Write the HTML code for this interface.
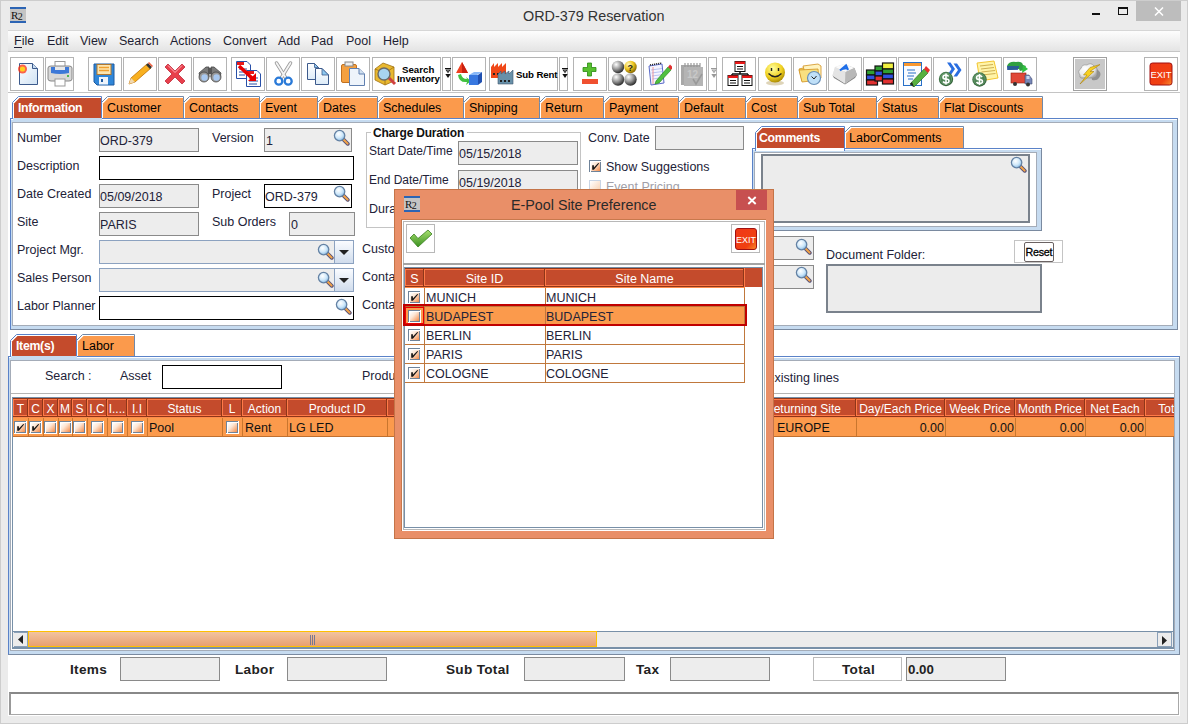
<!DOCTYPE html>
<html><head><meta charset="utf-8">
<style>
*{box-sizing:border-box}
body{margin:0;width:1188px;height:724px;overflow:hidden;position:relative;background:#ebebeb;font-family:"Liberation Sans",sans-serif;font-size:12.5px;color:#1e1e32}
.a{position:absolute}
.t{position:absolute;white-space:nowrap;line-height:1}
.btn{position:absolute;top:57px;height:34px;border:1px solid #b4b4b4;background:#fff;overflow:hidden}
.tab{position:absolute;white-space:nowrap;line-height:1}
.fld{position:absolute;background:#ededed;border:1px solid #8c8c8c}
.wf{position:absolute;background:#fff;border:1px solid #000}
</style></head><body>
<div class="a" style="left:0px;top:0px;width:1188px;height:724px;border:1px solid #cdcdcd;background:#ebebeb"></div>
<div class="a" style="left:10px;top:7px;width:16px;height:16px;background:#c4c4c4;border-top:2px solid #2c64b4;border-bottom:2px solid #2c64b4"></div>
<div class="t" style="left:11px;top:10px;font-family:'Liberation Serif',serif;font-size:11px;color:#111;letter-spacing:-0.5px">R<span style="font-size:10px;position:relative;top:1px">2</span></div>
<div class="t" style="left:523px;top:9px;font-size:14.4px;color:#333">ORD-379 Reservation</div>
<div class="a" style="left:1092px;top:13px;width:8px;height:2px;background:#111"></div>
<div class="a" style="left:1118px;top:7px;width:10px;height:8px;border:1px solid #111;border-top-width:2px"></div>
<div class="a" style="left:1136px;top:1px;width:45px;height:20px;background:#bdbdbd"></div>
<svg class="a" style="left:1154px;top:7px" width="10" height="9"><path d="M1 0.5L9 8.5M9 0.5L1 8.5" stroke="#fff" stroke-width="1.5"/></svg>
<div class="a" style="left:8px;top:30px;width:1172px;height:686px;background:#fff"></div>
<div class="a" style="left:8px;top:30px;width:1172px;height:22px;background:linear-gradient(#fdfdfd,#e4e4e4);border-top:1px solid #d6d6d6;border-bottom:1px solid #c6c6c6"></div>
<div class="t" style="left:14px;top:35px;font-size:12.5px">File</div>
<div class="t" style="left:47px;top:35px;font-size:12.5px">Edit</div>
<div class="t" style="left:80px;top:35px;font-size:12.5px">View</div>
<div class="t" style="left:119px;top:35px;font-size:12.5px">Search</div>
<div class="t" style="left:170px;top:35px;font-size:12.5px">Actions</div>
<div class="t" style="left:223px;top:35px;font-size:12.5px">Convert</div>
<div class="t" style="left:278px;top:35px;font-size:12.5px">Add</div>
<div class="t" style="left:311px;top:35px;font-size:12.5px">Pad</div>
<div class="t" style="left:346px;top:35px;font-size:12.5px">Pool</div>
<div class="t" style="left:383px;top:35px;font-size:12.5px">Help</div>
<div class="a" style="left:14px;top:47px;width:8px;height:1px;background:#1e1e32"></div>
<div class="a" style="left:8px;top:92px;width:1172px;height:1px;background:#c4c4c4"></div>
<div class="btn" style="left:10px;width:34px"></div>
<div class="btn" style="left:45px;width:29px"></div>
<div class="btn" style="left:88px;width:34px"></div>
<div class="btn" style="left:123px;width:34px"></div>
<div class="btn" style="left:158px;width:34px"></div>
<div class="btn" style="left:193px;width:34px"></div>
<div class="btn" style="left:231px;width:34px"></div>
<div class="btn" style="left:266px;width:34px"></div>
<div class="btn" style="left:301px;width:34px"></div>
<div class="btn" style="left:336px;width:34px"></div>
<div class="btn" style="left:372px;width:69px"></div>
<div class="btn" style="left:442px;width:9px"></div>
<div class="btn" style="left:452px;width:34px"></div>
<div class="btn" style="left:489px;width:69px"></div>
<div class="btn" style="left:559px;width:9px"></div>
<div class="btn" style="left:573px;width:34px"></div>
<div class="btn" style="left:608px;width:34px"></div>
<div class="btn" style="left:643px;width:34px"></div>
<div class="btn" style="left:678px;width:29px"></div>
<div class="btn" style="left:708px;width:9px"></div>
<div class="btn" style="left:722px;width:34px"></div>
<div class="btn" style="left:758px;width:34px"></div>
<div class="btn" style="left:793px;width:34px"></div>
<div class="btn" style="left:828px;width:34px"></div>
<div class="btn" style="left:863px;width:34px"></div>
<div class="btn" style="left:898px;width:34px"></div>
<div class="btn" style="left:933px;width:34px"></div>
<div class="btn" style="left:968px;width:34px"></div>
<div class="btn" style="left:1003px;width:34px"></div>
<div class="btn" style="left:1073px;width:34px;background:#c8c8c8;box-shadow:inset 0 0 0 1px #fff;border-color:#a0a0a0"></div>
<div class="btn" style="left:1144px;width:34px"></div>
<svg class="a" style="left:17px;top:61px" width="24" height="26" viewBox="0 0 24 26"><defs><linearGradient id="nd" x1="0" y1="0" x2="1" y2="1"><stop offset="0" stop-color="#fff"/><stop offset="1" stop-color="#cfe2f4"/></linearGradient></defs><path d="M2.5 2.5H15.5L20.5 7.5V23.5H2.5Z" fill="url(#nd)" stroke="#3c5a8c"/><path d="M15.5 2.5V7.5H20.5" fill="#c8dcf0" stroke="#3c5a8c"/><circle cx="5.5" cy="8" r="4.5" fill="#ff3010" opacity="0.75"/><circle cx="5.5" cy="8" r="2.6" fill="#ffd020"/></svg>
<svg class="a" style="left:46px;top:60px" width="28" height="28" viewBox="0 0 28 28"><rect x="9" y="1.5" width="10" height="9" fill="#fff" stroke="#999"/><path d="M2 8Q2 6 5 6H23Q26 6 26 8V19Q26 21 23 21H5Q2 21 2 19Z" fill="#d8d8d8" stroke="#888"/><path d="M5 7H23V13Q14 15 5 13Z" fill="#3c78d8"/><rect x="9" y="7" width="10" height="3" fill="#e8e8e8"/><rect x="9" y="19" width="10" height="7" fill="#fff" stroke="#999"/><circle cx="22" cy="16" r="1" fill="#2a2"/></svg>
<svg class="a" style="left:93px;top:63px" width="23" height="23" viewBox="0 0 23 23"><path d="M1 1H21V22H4L1 19Z" fill="#2f86d8" stroke="#1f5aa0"/><rect x="4" y="1.5" width="14" height="10" fill="#fde6b0" stroke="#b07830"/><path d="M6 4.5H16M6 7.5H16" stroke="#f0a030" stroke-width="1.6"/><rect x="6" y="14" width="9" height="7.5" fill="#eef4fb"/><rect x="8" y="16" width="2" height="3" fill="#1f5aa0"/></svg>
<svg class="a" style="left:127px;top:62px" width="26" height="24" viewBox="0 0 26 24"><path d="M2 22L4 16L20 2L24 6L8 20Z" fill="#f8b020" stroke="#c07000" stroke-width="0.8"/><path d="M2 22L4 16L8 20Z" fill="#f0d8b0"/><path d="M19 3L23 7L25 5L21 1Z" fill="#333"/><path d="M21.5 0.5L25.5 4.5" stroke="#f06040" stroke-width="1.5"/></svg>
<svg class="a" style="left:164px;top:63px" width="22" height="22" viewBox="0 0 22 22"><path d="M4 1L11 8L18 1L21 4L14 11L21 18L18 21L11 14L4 21L1 18L8 11L1 4Z" fill="#e8404c" stroke="#c02838" stroke-width="0.8"/><path d="M4 2.5L11 9.5L18 2.5" fill="none" stroke="#ffb0b8" stroke-width="1"/></svg>
<svg class="a" style="left:197px;top:65px" width="26" height="18" viewBox="0 0 26 18"><path d="M2 8L9 2H12V12H3Z" fill="#7a7a7a" stroke="#444" stroke-width="0.8"/><path d="M24 8L17 2H14V12H23Z" fill="#7a7a7a" stroke="#444" stroke-width="0.8"/><rect x="11" y="3" width="4" height="6" fill="#555"/><circle cx="7" cy="12" r="5" fill="#999" stroke="#444" stroke-width="0.8"/><circle cx="19" cy="12" r="5" fill="#999" stroke="#444" stroke-width="0.8"/><circle cx="7.5" cy="12.5" r="3.2" fill="#a8c8f0"/><circle cx="19.5" cy="12.5" r="3.2" fill="#a8c8f0"/></svg>
<svg class="a" style="left:235px;top:60px" width="27" height="28" viewBox="0 0 27 28"><path d="M1.5 1.5H12L15.5 5V18.5H1.5Z" fill="#fff" stroke="#2850a8"/><rect x="2" y="2" width="7" height="3" fill="#e81818"/><path d="M4 9H12M4 12H12M4 15H10" stroke="#2850a8"/><path d="M11.5 10.5H22L25.5 14V26.5H11.5Z" fill="#fff" stroke="#2850a8"/><rect x="12" y="11" width="7" height="3" fill="#e81818"/><path d="M14 18H23M14 21H23M14 24H22" stroke="#2850a8"/><path d="M4 6L18 19" stroke="#e80000" stroke-width="3.5"/><path d="M13 21H21V13Z" fill="#e80000"/></svg>
<svg class="a" style="left:273px;top:61px" width="21" height="26" viewBox="0 0 21 26"><path d="M3.5 2L12.5 16.5" stroke="#9a9a9a" stroke-width="3.4" stroke-linecap="round"/><path d="M17.5 2L8.5 16.5" stroke="#9a9a9a" stroke-width="3.4" stroke-linecap="round"/><path d="M3.5 2L12.5 16.5M17.5 2L8.5 16.5" stroke="#f4f4f4" stroke-width="1.8" stroke-linecap="round"/><circle cx="5.8" cy="20.2" r="3.5" fill="none" stroke="#2a7ad8" stroke-width="2.3"/><circle cx="15.2" cy="20.2" r="3.5" fill="none" stroke="#2a7ad8" stroke-width="2.3"/></svg>
<svg class="a" style="left:306px;top:62px" width="24" height="24" viewBox="0 0 24 24"><defs><linearGradient id="cpg" x1="0" y1="0" x2="0" y2="1"><stop offset="0" stop-color="#fff"/><stop offset="1" stop-color="#dcebf8"/></linearGradient></defs><path d="M1.5 1.5H8.5L12.5 5.5V17.5H1.5Z" fill="url(#cpg)" stroke="#3c5a8c"/><path d="M8.5 1.5V5.5H12.5Z" fill="#8cc8f0" stroke="#3c5a8c" stroke-width="0.8"/><path d="M9.5 6.5H16L22.5 13V22.5H9.5Z" fill="url(#cpg)" stroke="#3c5a8c"/><path d="M16 6.5V13H22.5Z" fill="#8cc8f0" stroke="#3c5a8c" stroke-width="0.8"/></svg>
<svg class="a" style="left:340px;top:61px" width="27" height="26" viewBox="0 0 27 26"><rect x="1.5" y="3.5" width="15" height="18" rx="1.5" fill="#f4a040" stroke="#c07020"/><rect x="5" y="1" width="8" height="4" fill="#eee" stroke="#888"/><path d="M9.5 7.5H19L24.5 13V24.5H9.5Z" fill="#eef4fb" stroke="#6080b0"/><path d="M19 7.5V13H24.5" fill="#d0e0f0" stroke="#6080b0"/></svg>
<svg class="a" style="left:373px;top:61px" width="24" height="26" viewBox="0 0 24 26"><path d="M2 8L10 2L21 6V20L12 24L2 19Z" fill="#e8b830" stroke="#a07010" stroke-width="0.8"/><path d="M2 8L12 12V24" fill="none" stroke="#a07010" stroke-width="0.8"/><path d="M12 12L21 6" stroke="#a07010" stroke-width="0.8"/><path d="M16 17L22 23" stroke="#d04040" stroke-width="3"/><circle cx="11" cy="13" r="6" fill="#a8d4f0" stroke="#6a6a6a" stroke-width="1.4"/></svg>
<div class="t" style="left:402px;top:65px;font-size:9.7px;font-weight:bold;color:#000">Search</div>
<div class="t" style="left:397px;top:74px;font-size:9.7px;font-weight:bold;color:#000;letter-spacing:-0.1px">Inventory</div>
<svg class="a" style="left:444.5px;top:68px" width="6" height="11" viewBox="0 0 6 11"><path d="M0 0.5H6" stroke="#111"/><path d="M0.3 1.5H5.7L3 5.2Z" fill="#111"/><path d="M1.6 2.3H4.4L3 4Z" fill="#fff" opacity="0.5"/><path d="M0.3 6H5.7L3 10Z" fill="#111"/></svg>
<svg class="a" style="left:455px;top:61px" width="28" height="26" viewBox="0 0 28 26"><path d="M7 1L13 12H1Z" fill="#f04020"/><path d="M7 1L13 12H7Z" fill="#c82010"/><path d="M3 14Q4 22 12 21L11 24L16 20L11 16L12 18Q7 18 6 13Z" fill="#40c040"/><path d="M14 14L19 11H27L22 14Z" fill="#88b8f8"/><rect x="14" y="14" width="9" height="10" fill="#3878e0"/><path d="M23 14L27 11V21L23 24Z" fill="#2050b0"/></svg>
<svg class="a" style="left:490px;top:61px" width="26" height="26" viewBox="0 0 26 26"><path d="M1 17V6L4 2V6L8 2V6L12 2V6L16 2V17Z" fill="#f04818"/><rect x="3" y="12" width="2" height="2" fill="#222"/><rect x="7" y="12" width="2" height="2" fill="#222"/><path d="M8 23V13L11 10V13L15 10V13L19 10V13L23 9V23Z" fill="#6890a8" stroke="#405870" stroke-width="0.6"/><rect x="10" y="19" width="2" height="2" fill="#222"/><rect x="14" y="19" width="2" height="2" fill="#222"/><rect x="18" y="19" width="2" height="2" fill="#222"/></svg>
<div class="t" style="left:516px;top:70px;font-size:9.7px;font-weight:bold;color:#000;letter-spacing:-0.15px">Sub Rent</div>
<svg class="a" style="left:561.5px;top:68px" width="6" height="11" viewBox="0 0 6 11"><path d="M0 0.5H6" stroke="#111"/><path d="M0.3 1.5H5.7L3 5.2Z" fill="#111"/><path d="M1.6 2.3H4.4L3 4Z" fill="#fff" opacity="0.5"/><path d="M0.3 6H5.7L3 10Z" fill="#111"/></svg>
<svg class="a" style="left:581px;top:62px" width="18" height="23" viewBox="0 0 18 23"><path d="M6.5 1H10.5V5.5H15V9.5H10.5V14H6.5V9.5H2V5.5H6.5Z" fill="#58c030" stroke="#2a8a10" stroke-width="0.8"/><rect x="1" y="17" width="16" height="5" fill="#f05030"/></svg>
<svg class="a" style="left:611px;top:60px" width="27" height="27" viewBox="0 0 27 27"><defs><radialGradient id="bl" cx="0.35" cy="0.3" r="0.75"><stop offset="0" stop-color="#fff"/><stop offset="0.5" stop-color="#999"/><stop offset="1" stop-color="#222"/></radialGradient><radialGradient id="by" cx="0.35" cy="0.3" r="0.75"><stop offset="0" stop-color="#fff8c0"/><stop offset="0.5" stop-color="#f0c820"/><stop offset="1" stop-color="#806000"/></radialGradient></defs><circle cx="7" cy="7" r="6.2" fill="url(#bl)"/><circle cx="19.5" cy="7" r="6.2" fill="url(#by)"/><circle cx="7" cy="19.5" r="6.2" fill="url(#bl)"/><circle cx="19.5" cy="19.5" r="6.2" fill="url(#bl)"/><text x="16.5" y="11" font-size="9" font-weight="bold" fill="#222" font-family="Liberation Sans">?</text></svg>
<svg class="a" style="left:647px;top:61px" width="25" height="26" viewBox="0 0 25 26"><path d="M2 5L15 3L17 22L4 24Z" fill="#f4f4ff" stroke="#5a6ac8"/><path d="M4 9L15 7.5M4.5 12L15.5 10.5M5 15L16 13.5M5.5 18L16 16.5" stroke="#a8b8f0" stroke-width="0.8"/><path d="M6 6V23" stroke="#f08080" stroke-width="0.8"/><path d="M3 4L15 2" stroke="#222" stroke-width="1.5" stroke-dasharray="1,1"/><path d="M9 20L21 6L24 9L12 22L8 23Z" fill="#50c040" stroke="#208010" stroke-width="0.6"/><path d="M21 6L23 3.5L26 6.5L24 9Z" fill="#e03030"/></svg>
<svg class="a" style="left:679px;top:61px" width="27" height="26" viewBox="0 0 27 26"><rect x="2" y="4" width="19" height="20" fill="#a8a8a8"/><rect x="5" y="6" width="19" height="19" fill="#b4b4b4"/><path d="M6 2V6M9 2V6M12 2V6M15 2V6M18 2V6M21 2V6" stroke="#999" stroke-width="1.2"/><text x="8" y="17" font-size="10" font-weight="bold" fill="#c8c8c8" font-family="Liberation Sans">12</text><path d="M14 18L17 23L23 13" fill="none" stroke="#999" stroke-width="1.5"/></svg>
<svg class="a" style="left:710.5px;top:68px" width="6" height="11" viewBox="0 0 6 11"><path d="M0 0.5H6" stroke="#999"/><path d="M0.3 1.5H5.7L3 5.2Z" fill="#999"/><path d="M1.6 2.3H4.4L3 4Z" fill="#fff" opacity="0.5"/><path d="M0.3 6H5.7L3 10Z" fill="#999"/></svg>
<svg class="a" style="left:727px;top:60px" width="26" height="27" viewBox="0 0 26 27"><path d="M13 11V14M5 14H21M5 14V17M21 14V17" stroke="#111" stroke-width="1.5"/><rect x="8" y="1.5" width="10" height="10" fill="#fff" stroke="#111"/><rect x="8" y="1.5" width="10" height="2.5" fill="#e81818"/><path d="M10 6.5H16M10 9H16" stroke="#111"/><rect x="1" y="15.5" width="10" height="10" fill="#fff" stroke="#111"/><rect x="1" y="15.5" width="10" height="2.5" fill="#e81818"/><path d="M3 20.5H9M3 23H9" stroke="#111"/><rect x="15" y="15.5" width="10" height="10" fill="#fff" stroke="#111"/><rect x="15" y="15.5" width="10" height="2.5" fill="#e81818"/><path d="M17 20.5H23M17 23H23" stroke="#111"/></svg>
<svg class="a" style="left:763px;top:61px" width="24" height="25" viewBox="0 0 24 25"><defs><radialGradient id="sm" cx="0.4" cy="0.3" r="0.75"><stop offset="0" stop-color="#ffffa0"/><stop offset="0.6" stop-color="#f0d020"/><stop offset="1" stop-color="#a08000"/></radialGradient></defs><ellipse cx="12" cy="22" rx="9" ry="2.5" fill="#c8b888" opacity="0.6"/><circle cx="12" cy="11.5" r="10" fill="url(#sm)"/><path d="M8.5 7V10M15.5 7V10" stroke="#222" stroke-width="1.4"/><path d="M5.5 12.5Q12 19 18.5 12.5" fill="none" stroke="#222" stroke-width="1.4"/></svg>
<svg class="a" style="left:798px;top:62px" width="25" height="24" viewBox="0 0 25 24"><path d="M1 7L9 5L10 7H20V17L4 19Z" fill="#f8d860" stroke="#d09020" stroke-width="0.8"/><path d="M5 4L20 2L23 4V16L9 18Z" fill="#fff4c0" stroke="#d09020" stroke-width="0.8"/><path d="M1 8L20 7L21 18L4 20Z" fill="#f8e080" stroke="#d09020" stroke-width="0.8"/><circle cx="16" cy="16" r="6.5" fill="#c0e0f8" stroke="#6890b8" stroke-width="1.2"/><path d="M13.5 14.5L16 17L18.5 14" fill="none" stroke="#222" stroke-width="1"/></svg>
<svg class="a" style="left:831px;top:62px" width="28" height="24" viewBox="0 0 28 24"><defs><linearGradient id="kg" x1="0" y1="0" x2="1" y2="0"><stop offset="0" stop-color="#e8e8e8"/><stop offset="0.5" stop-color="#d8d8d8"/><stop offset="1" stop-color="#909090"/></linearGradient></defs><path d="M4 5L13 2L23.5 6L26 13L14 21.5L1.5 13.5Z" fill="url(#kg)"/><path d="M1.5 13.5L14 21.5L26 13L24 16L14 22.5L3 16Z" fill="#888"/><path d="M4 5L13 2L23.5 6L14.5 10Z" fill="#fafafa"/><path d="M4 5L14.5 10L14 21.5L1.5 13.5Z" fill="#e4e4e4"/><path d="M14.5 10L23.5 6L26 13L14 21.5Z" fill="#b8b8b8"/><path d="M9 8.5L15 3.5L17 8M11 7L16.5 6" stroke="#1e6ee8" stroke-width="2.2" fill="none"/></svg>
<svg class="a" style="left:865px;top:61px" width="31" height="25" viewBox="0 0 31 25"><g stroke="#111" stroke-width="1.2"><rect x="1.5" y="9" width="11" height="5" fill="#30a030"/><rect x="1.5" y="14" width="11" height="5" fill="#3050e0"/><rect x="1.5" y="19" width="11" height="5" fill="#e03030"/><rect x="10" y="5" width="9" height="5" fill="#30a030"/><rect x="10" y="10" width="9" height="5" fill="#3050e0"/><rect x="10" y="15" width="9" height="5" fill="#e03030"/><rect x="17.5" y="2" width="11" height="6" fill="#f0f040"/><rect x="17.5" y="8" width="11" height="5" fill="#30a030"/><rect x="17.5" y="13" width="11" height="5" fill="#3050e0"/><rect x="17.5" y="18" width="11" height="5" fill="#e03030"/></g></svg>
<svg class="a" style="left:902px;top:61px" width="28" height="26" viewBox="0 0 28 26"><rect x="1.5" y="1.5" width="18" height="23" fill="#f8fbff" stroke="#2870c8"/><rect x="2" y="2" width="17" height="3" fill="#f89830"/><path d="M5 9H13M6 12H14M5 15H12M6 18H11" stroke="#2870c8" stroke-width="1.2"/><path d="M8 23L22 8L26 12L12 26Z" fill="#58b040" stroke="#206010" stroke-width="0.6"/><path d="M22 8L24 5L28 9L26 12Z" fill="#e83030"/><path d="M8 23L10 21L12 26Z" fill="#222"/></svg>
<svg class="a" style="left:938px;top:62px" width="25" height="25" viewBox="0 0 25 25"><path d="M9 0.5H12.5L17 7L12.5 13.5H9L13.5 7Z" fill="#2a6ee0"/><path d="M15.5 1.5H19L23.5 8L19 14.5H15.5L20 8Z" fill="#2a6ee0"/><defs><radialGradient id="dg1" cx="0.45" cy="0.4" r="0.6"><stop offset="0" stop-color="#6aa070"/><stop offset="0.8" stop-color="#3c7044"/><stop offset="1" stop-color="#2e5a34"/></radialGradient></defs><circle cx="8" cy="17" r="7.2" fill="url(#dg1)"/><circle cx="8" cy="17" r="5.6" fill="none" stroke="#7ab080" stroke-width="0.6"/><path d="M10.6 14.4Q9.5 13 8 13Q5 13 5 15.2Q5 17 8 17Q11 17 11 19Q11 21 8 21Q6 21 5 19.5M8 11.5V22.5" fill="none" stroke="#fff" stroke-width="1.6"/></svg>
<svg class="a" style="left:971px;top:60px" width="28" height="28" viewBox="0 0 28 28"><path d="M6 3L23 1L27 18L9 21Z" fill="#fff4a8" stroke="#f0c020" stroke-width="0.9"/><path d="M9 6L22 4.5M10 9L23 7.5M10.5 12L24 10.5M11 15L24.5 13.5" stroke="#c8a848" stroke-width="0.9"/><defs><radialGradient id="dg2" cx="0.45" cy="0.4" r="0.6"><stop offset="0" stop-color="#6aa070"/><stop offset="0.8" stop-color="#3c7044"/><stop offset="1" stop-color="#2e5a34"/></radialGradient></defs><circle cx="8.5" cy="19.5" r="7.2" fill="url(#dg2)"/><circle cx="8.5" cy="19.5" r="5.6" fill="none" stroke="#7ab080" stroke-width="0.6"/><path d="M11.1 16.9Q10.0 15.5 8.5 15.5Q5.5 15.5 5.5 17.7Q5.5 19.5 8.5 19.5Q11.5 19.5 11.5 21.5Q11.5 23.5 8.5 23.5Q6.5 23.5 5.5 22.0M8.5 14.0V25.0" fill="none" stroke="#fff" stroke-width="1.6"/></svg>
<svg class="a" style="left:1006px;top:60px" width="27" height="28" viewBox="0 0 27 28"><path d="M1 6Q3 1 10 2Q16 1 17 5L20 6L18 10L14 11L13 9Q10 10 2 10Z" fill="#30a040"/><path d="M1 7H13M1 9H12" stroke="#2848b0" stroke-width="1.4"/><path d="M17 5L22 9L16 13Z" fill="#30c040"/><rect x="5" y="13" width="15" height="10" fill="#e04838" stroke="#902010" stroke-width="0.6"/><path d="M19 15H23L26 19V24H19Z" fill="#7888b8" stroke="#404a70" stroke-width="0.6"/><rect x="20.5" y="16" width="3" height="3" fill="#c8d8f0"/><circle cx="9" cy="24" r="2" fill="#333"/><circle cx="22" cy="24.5" r="2" fill="#333"/></svg>
<svg class="a" style="left:1077px;top:62px" width="26" height="24" viewBox="0 0 26 24"><defs><radialGradient id="cl" cx="0.35" cy="0.35" r="0.7"><stop offset="0" stop-color="#fff"/><stop offset="0.7" stop-color="#e8e8e8"/><stop offset="1" stop-color="#a8a8a8"/></radialGradient></defs><path d="M14 8Q19 5 22 9Q25 12 22 16Q20 19 15 18Z" fill="#909090"/><path d="M3 13Q0 9 4 6.5Q5 2 10 3Q14 0 17 4Q21 5 20 10Q21 15 16 16H7Q2 17 3 13Z" fill="url(#cl)" stroke="#8c8c8c" stroke-width="0.6"/><path d="M23 2.5L13 9.5H17L3 22L10 13H6.5L13 5.5Z" fill="#f8d020" stroke="#a88010" stroke-width="0.6"/></svg>
<svg class="a" style="left:1149px;top:62px" width="24" height="24" viewBox="0 0 24 24"><defs><linearGradient id="ex" x1="0" y1="0" x2="1" y2="1"><stop offset="0" stop-color="#f03818"/><stop offset="0.7" stop-color="#f04010"/><stop offset="1" stop-color="#f89030"/></linearGradient></defs><rect x="1" y="1" width="22" height="22" rx="2.5" fill="url(#ex)" stroke="#a01010"/><text x="12" y="16" text-anchor="middle" font-size="9.5" fill="#fff" font-family="Liberation Sans">EXIT</text></svg>
<div class="a" style="left:10px;top:118px;width:1168px;height:212px;background:#c6dbf0;border:1px solid #5a82c8;border-right-color:#7a8aa0;border-bottom-color:#7a8aa0"></div>
<div class="a" style="left:11px;top:119px;width:1166px;height:1px;background:#fff"></div>
<div class="a" style="left:12px;top:122px;width:1161px;height:204px;background:#fff;border:1px solid #a4acb8"></div>
<svg class="a" style="left:0;top:0" width="1188" height="124"><path d="M101.5 118 V102.5 L107.5 96.5 H183.5 V118" fill="#fff" stroke="#7088a8"/><path d="M102.5 118 V103 L108 97.5 H182.5 V118" fill="none" stroke="#fff"/><path d="M103 118 V103.5 L108.5 98 H183 V118Z" fill="#fb9a4c"/><path d="M183.5 118 V102.5 L189.5 96.5 H259.5 V118" fill="#fff" stroke="#7088a8"/><path d="M184.5 118 V103 L190 97.5 H258.5 V118" fill="none" stroke="#fff"/><path d="M185 118 V103.5 L190.5 98 H259 V118Z" fill="#fb9a4c"/><path d="M259.5 118 V102.5 L265.5 96.5 H317.5 V118" fill="#fff" stroke="#7088a8"/><path d="M260.5 118 V103 L266 97.5 H316.5 V118" fill="none" stroke="#fff"/><path d="M261 118 V103.5 L266.5 98 H317 V118Z" fill="#fb9a4c"/><path d="M317.5 118 V102.5 L323.5 96.5 H377.5 V118" fill="#fff" stroke="#7088a8"/><path d="M318.5 118 V103 L324 97.5 H376.5 V118" fill="none" stroke="#fff"/><path d="M319 118 V103.5 L324.5 98 H377 V118Z" fill="#fb9a4c"/><path d="M377.5 118 V102.5 L383.5 96.5 H463.5 V118" fill="#fff" stroke="#7088a8"/><path d="M378.5 118 V103 L384 97.5 H462.5 V118" fill="none" stroke="#fff"/><path d="M379 118 V103.5 L384.5 98 H463 V118Z" fill="#fb9a4c"/><path d="M463.5 118 V102.5 L469.5 96.5 H539.5 V118" fill="#fff" stroke="#7088a8"/><path d="M464.5 118 V103 L470 97.5 H538.5 V118" fill="none" stroke="#fff"/><path d="M465 118 V103.5 L470.5 98 H539 V118Z" fill="#fb9a4c"/><path d="M539.5 118 V102.5 L545.5 96.5 H603.5 V118" fill="#fff" stroke="#7088a8"/><path d="M540.5 118 V103 L546 97.5 H602.5 V118" fill="none" stroke="#fff"/><path d="M541 118 V103.5 L546.5 98 H603 V118Z" fill="#fb9a4c"/><path d="M603.5 118 V102.5 L609.5 96.5 H678.5 V118" fill="#fff" stroke="#7088a8"/><path d="M604.5 118 V103 L610 97.5 H677.5 V118" fill="none" stroke="#fff"/><path d="M605 118 V103.5 L610.5 98 H678 V118Z" fill="#fb9a4c"/><path d="M678.5 118 V102.5 L684.5 96.5 H745.5 V118" fill="#fff" stroke="#7088a8"/><path d="M679.5 118 V103 L685 97.5 H744.5 V118" fill="none" stroke="#fff"/><path d="M680 118 V103.5 L685.5 98 H745 V118Z" fill="#fb9a4c"/><path d="M745.5 118 V102.5 L751.5 96.5 H797.5 V118" fill="#fff" stroke="#7088a8"/><path d="M746.5 118 V103 L752 97.5 H796.5 V118" fill="none" stroke="#fff"/><path d="M747 118 V103.5 L752.5 98 H797 V118Z" fill="#fb9a4c"/><path d="M797.5 118 V102.5 L803.5 96.5 H876.5 V118" fill="#fff" stroke="#7088a8"/><path d="M798.5 118 V103 L804 97.5 H875.5 V118" fill="none" stroke="#fff"/><path d="M799 118 V103.5 L804.5 98 H876 V118Z" fill="#fb9a4c"/><path d="M876.5 118 V102.5 L882.5 96.5 H938.5 V118" fill="#fff" stroke="#7088a8"/><path d="M877.5 118 V103 L883 97.5 H937.5 V118" fill="none" stroke="#fff"/><path d="M878 118 V103.5 L883.5 98 H938 V118Z" fill="#fb9a4c"/><path d="M938.5 118 V102.5 L944.5 96.5 H1042.5 V118" fill="#fff" stroke="#7088a8"/><path d="M939.5 118 V103 L945 97.5 H1041.5 V118" fill="none" stroke="#fff"/><path d="M940 118 V103.5 L945.5 98 H1042 V118Z" fill="#fb9a4c"/><path d="M12.5 118 V102.5 L18.5 96.5 H101.5 V118" fill="#fff" stroke="#5a82c8"/><rect x="13" y="118" width="89" height="4" fill="#c6dbf0"/><path d="M13.5 118 V103 L19 97.5 H100.5 V118" fill="none" stroke="#fff"/><path d="M14 118 V103.5 L19.5 98 H101 V118Z" fill="#c44b2c"/></svg>
<div class="t" style="left:18px;top:101.59px;font-size:12.3px;color:#fff;font-weight:bold;letter-spacing:-0.3px">Information</div>
<div class="t" style="left:107px;top:102.42px;font-size:12.5px;color:#000">Customer</div>
<div class="t" style="left:189px;top:102.42px;font-size:12.5px;color:#000">Contacts</div>
<div class="t" style="left:265px;top:102.42px;font-size:12.5px;color:#000">Event</div>
<div class="t" style="left:323px;top:102.42px;font-size:12.5px;color:#000">Dates</div>
<div class="t" style="left:383px;top:102.42px;font-size:12.5px;color:#000">Schedules</div>
<div class="t" style="left:469px;top:102.42px;font-size:12.5px;color:#000">Shipping</div>
<div class="t" style="left:545px;top:102.42px;font-size:12.5px;color:#000">Return</div>
<div class="t" style="left:609px;top:102.42px;font-size:12.5px;color:#000">Payment</div>
<div class="t" style="left:684px;top:102.42px;font-size:12.5px;color:#000">Default</div>
<div class="t" style="left:751px;top:102.42px;font-size:12.5px;color:#000">Cost</div>
<div class="t" style="left:803px;top:102.42px;font-size:12.5px;color:#000">Sub Total</div>
<div class="t" style="left:882px;top:102.42px;font-size:12.5px;color:#000">Status</div>
<div class="t" style="left:944px;top:102.42px;font-size:12.5px;color:#000">Flat Discounts</div>
<div class="t" style="left:17px;top:132.42px;font-size:12.5px;color:#222238">Number</div>
<div class="t" style="left:17px;top:160.42px;font-size:12.5px;color:#222238">Description</div>
<div class="t" style="left:17px;top:188.42px;font-size:12.5px;color:#222238">Date Created</div>
<div class="t" style="left:17px;top:216.42px;font-size:12.5px;color:#222238">Site</div>
<div class="t" style="left:17px;top:244.42px;font-size:12.5px;color:#222238">Project Mgr.</div>
<div class="t" style="left:17px;top:272.42px;font-size:12.5px;color:#222238">Sales Person</div>
<div class="t" style="left:17px;top:300.42px;font-size:12.5px;color:#222238">Labor Planner</div>
<div class="a" style="left:99px;top:128px;width:100px;height:24px;background:#ededed;border:1px solid #8a8a8a;"></div>
<div class="t" style="left:100px;top:135.42px;font-size:12.5px;color:#222238">ORD-379</div>
<div class="t" style="left:212px;top:132.42px;font-size:12.5px;color:#222238">Version</div>
<div class="a" style="left:264px;top:128px;width:88px;height:24px;background:#ededed;border:1px solid #8a8a8a;"></div>
<div class="t" style="left:266px;top:135.42px;font-size:12.5px;color:#222238">1</div>
<svg class="a" style="left:333px;top:129px" width="17" height="17" viewBox="0 0 17 17"><defs><radialGradient id="mg1" cx="0.4" cy="0.35" r="0.7"><stop offset="0" stop-color="#ffffff"/><stop offset="0.55" stop-color="#cfe8fa"/><stop offset="1" stop-color="#7fb4e0"/></radialGradient></defs><path d="M9.8 9.8L14.8 14.8" stroke="#5c5478" stroke-width="3.8" stroke-linecap="round"/><path d="M10.3 10.3L14.6 14.6" stroke="#f4a446" stroke-width="2" stroke-linecap="round"/><circle cx="6.6" cy="6.6" r="5.2" fill="url(#mg1)" stroke="#6482a4" stroke-width="1.3"/></svg>
<div class="a" style="left:99px;top:156px;width:255px;height:24px;background:#fff;border:1px solid #000;"></div>
<div class="a" style="left:99px;top:184px;width:100px;height:24px;background:#ededed;border:1px solid #8a8a8a;"></div>
<div class="t" style="left:100px;top:191.42px;font-size:12.5px;color:#222238">05/09/2018</div>
<div class="t" style="left:212px;top:188.42px;font-size:12.5px;color:#222238">Project</div>
<div class="a" style="left:264px;top:184px;width:88px;height:24px;background:#fff;border:1px solid #000;"></div>
<div class="t" style="left:265px;top:191.42px;font-size:12.5px;color:#222238">ORD-379</div>
<svg class="a" style="left:333px;top:185px" width="17" height="17" viewBox="0 0 17 17"><defs><radialGradient id="mg2" cx="0.4" cy="0.35" r="0.7"><stop offset="0" stop-color="#ffffff"/><stop offset="0.55" stop-color="#cfe8fa"/><stop offset="1" stop-color="#7fb4e0"/></radialGradient></defs><path d="M9.8 9.8L14.8 14.8" stroke="#5c5478" stroke-width="3.8" stroke-linecap="round"/><path d="M10.3 10.3L14.6 14.6" stroke="#f4a446" stroke-width="2" stroke-linecap="round"/><circle cx="6.6" cy="6.6" r="5.2" fill="url(#mg2)" stroke="#6482a4" stroke-width="1.3"/></svg>
<div class="a" style="left:99px;top:212px;width:100px;height:24px;background:#ededed;border:1px solid #8a8a8a;"></div>
<div class="t" style="left:100px;top:219.42px;font-size:12.5px;color:#222238">PARIS</div>
<div class="t" style="left:212px;top:216.42px;font-size:12.5px;color:#222238">Sub Orders</div>
<div class="a" style="left:289px;top:212px;width:66px;height:24px;background:#ededed;border:1px solid #8a8a8a;"></div>
<div class="t" style="left:291px;top:219.42px;font-size:12.5px;color:#222238">0</div>
<div class="a" style="left:99px;top:240px;width:255px;height:24px;background:#ededed;border:1px solid #8ca2c0"></div>
<div class="a" style="left:334px;top:240px;width:20px;height:24px;background:linear-gradient(#fafcff,#d0dcec);border:1px solid #8ca2c0"></div>
<svg class="a" style="left:339px;top:250px" width="10" height="5" viewBox="0 0 10 5"><path d="M0 0H10L5 5Z" fill="#222"/></svg>
<svg class="a" style="left:317px;top:243px" width="17" height="17" viewBox="0 0 17 17"><defs><radialGradient id="mg3" cx="0.4" cy="0.35" r="0.7"><stop offset="0" stop-color="#ffffff"/><stop offset="0.55" stop-color="#cfe8fa"/><stop offset="1" stop-color="#7fb4e0"/></radialGradient></defs><path d="M9.8 9.8L14.8 14.8" stroke="#5c5478" stroke-width="3.8" stroke-linecap="round"/><path d="M10.3 10.3L14.6 14.6" stroke="#f4a446" stroke-width="2" stroke-linecap="round"/><circle cx="6.6" cy="6.6" r="5.2" fill="url(#mg3)" stroke="#6482a4" stroke-width="1.3"/></svg>
<div class="a" style="left:99px;top:268px;width:255px;height:24px;background:#ededed;border:1px solid #8ca2c0"></div>
<div class="a" style="left:334px;top:268px;width:20px;height:24px;background:linear-gradient(#fafcff,#d0dcec);border:1px solid #8ca2c0"></div>
<svg class="a" style="left:339px;top:278px" width="10" height="5" viewBox="0 0 10 5"><path d="M0 0H10L5 5Z" fill="#222"/></svg>
<svg class="a" style="left:317px;top:271px" width="17" height="17" viewBox="0 0 17 17"><defs><radialGradient id="mg4" cx="0.4" cy="0.35" r="0.7"><stop offset="0" stop-color="#ffffff"/><stop offset="0.55" stop-color="#cfe8fa"/><stop offset="1" stop-color="#7fb4e0"/></radialGradient></defs><path d="M9.8 9.8L14.8 14.8" stroke="#5c5478" stroke-width="3.8" stroke-linecap="round"/><path d="M10.3 10.3L14.6 14.6" stroke="#f4a446" stroke-width="2" stroke-linecap="round"/><circle cx="6.6" cy="6.6" r="5.2" fill="url(#mg4)" stroke="#6482a4" stroke-width="1.3"/></svg>
<div class="a" style="left:99px;top:296px;width:255px;height:24px;background:#fff;border:1px solid #000;"></div>
<svg class="a" style="left:335px;top:298px" width="17" height="17" viewBox="0 0 17 17"><defs><radialGradient id="mg5" cx="0.4" cy="0.35" r="0.7"><stop offset="0" stop-color="#ffffff"/><stop offset="0.55" stop-color="#cfe8fa"/><stop offset="1" stop-color="#7fb4e0"/></radialGradient></defs><path d="M9.8 9.8L14.8 14.8" stroke="#5c5478" stroke-width="3.8" stroke-linecap="round"/><path d="M10.3 10.3L14.6 14.6" stroke="#f4a446" stroke-width="2" stroke-linecap="round"/><circle cx="6.6" cy="6.6" r="5.2" fill="url(#mg5)" stroke="#6482a4" stroke-width="1.3"/></svg>
<div class="a" style="left:366px;top:132px;width:215px;height:96px;border:1px solid #c4c4c4"></div>
<div class="a" style="left:371px;top:126px;width:96px;height:12px;background:#fff"></div>
<div class="t" style="left:373px;top:126.84px;font-size:12px;font-weight:bold;color:#111;letter-spacing:-0.2px">Charge Duration</div>
<div class="t" style="left:369px;top:144.84px;font-size:12px;color:#222238">Start Date/Time</div>
<div class="a" style="left:458px;top:141px;width:120px;height:24px;background:#ededed;border:1px solid #8a8a8a;"></div>
<div class="t" style="left:459px;top:148.42px;font-size:12.5px;color:#222238">05/15/2018</div>
<div class="t" style="left:369px;top:173.84px;font-size:12px;color:#222238">End Date/Time</div>
<div class="a" style="left:458px;top:170px;width:120px;height:24px;background:#ededed;border:1px solid #8a8a8a;"></div>
<div class="t" style="left:459px;top:177.42px;font-size:12.5px;color:#222238">05/19/2018</div>
<div class="t" style="left:369px;top:203.42px;font-size:12.5px;color:#222238">Duration</div>
<div class="t" style="left:588px;top:132.42px;font-size:12.5px;color:#222238">Conv. Date</div>
<div class="a" style="left:655px;top:126px;width:89px;height:24px;background:#ededed;border:1px solid #8a8a8a;"></div>
<div class="t" style="left:606px;top:161.42px;font-size:12.5px;color:#222238">Show Suggestions</div>
<div class="a" style="left:589px;top:180px;width:12px;height:12px;border:1px solid #c8d4e4;background:linear-gradient(135deg,#fff,#f8d0b0)"></div>
<div class="t" style="left:606px;top:181.42px;font-size:12.5px;color:#a0a0a8">Event Pricing</div>
<div class="t" style="left:362px;top:243.42px;font-size:12.5px;color:#222238">Customer</div>
<div class="t" style="left:362px;top:271.42px;font-size:12.5px;color:#222238">Contact</div>
<div class="t" style="left:362px;top:299.42px;font-size:12.5px;color:#222238">Contact</div>
<div class="a" style="left:600px;top:236px;width:214px;height:24px;background:#ededed;border:1px solid #8a8a8a;"></div>
<svg class="a" style="left:795px;top:238px" width="17" height="17" viewBox="0 0 17 17"><defs><radialGradient id="mg6" cx="0.4" cy="0.35" r="0.7"><stop offset="0" stop-color="#ffffff"/><stop offset="0.55" stop-color="#cfe8fa"/><stop offset="1" stop-color="#7fb4e0"/></radialGradient></defs><path d="M9.8 9.8L14.8 14.8" stroke="#5c5478" stroke-width="3.8" stroke-linecap="round"/><path d="M10.3 10.3L14.6 14.6" stroke="#f4a446" stroke-width="2" stroke-linecap="round"/><circle cx="6.6" cy="6.6" r="5.2" fill="url(#mg6)" stroke="#6482a4" stroke-width="1.3"/></svg>
<div class="a" style="left:600px;top:265px;width:214px;height:24px;background:#ededed;border:1px solid #8a8a8a;"></div>
<svg class="a" style="left:795px;top:266px" width="17" height="17" viewBox="0 0 17 17"><defs><radialGradient id="mg7" cx="0.4" cy="0.35" r="0.7"><stop offset="0" stop-color="#ffffff"/><stop offset="0.55" stop-color="#cfe8fa"/><stop offset="1" stop-color="#7fb4e0"/></radialGradient></defs><path d="M9.8 9.8L14.8 14.8" stroke="#5c5478" stroke-width="3.8" stroke-linecap="round"/><path d="M10.3 10.3L14.6 14.6" stroke="#f4a446" stroke-width="2" stroke-linecap="round"/><circle cx="6.6" cy="6.6" r="5.2" fill="url(#mg7)" stroke="#6482a4" stroke-width="1.3"/></svg>
<div class="a" style="left:752px;top:148px;width:290px;height:83px;background:#c6dbf0;border:1px solid #5a82c8;border-right-color:#7a8aa0;border-bottom-color:#7a8aa0"></div>
<div class="a" style="left:753px;top:149px;width:288px;height:1px;background:#fff"></div>
<div class="a" style="left:754px;top:152px;width:283px;height:75px;background:#fff;border:1px solid #a4acb8"></div>
<svg class="a" style="left:0;top:0" width="1188" height="154"><path d="M844.5 148 V132.5 L850.5 126.5 H963.5 V148" fill="#fff" stroke="#7088a8"/><path d="M846 148 V133.5 L851.5 128 H963 V148Z" fill="#fb9a4c"/><path d="M755.5 151 V132.5 L761.5 126.5 H844.5 V151" fill="#fff" stroke="#5a82c8"/><path d="M757 148 V133.5 L762.5 128 H844 V148Z" fill="#c44b2c"/></svg>
<div class="t" style="left:759px;top:131.59px;font-size:12.3px;color:#fff;font-weight:bold;letter-spacing:-0.3px">Comments</div>
<div class="t" style="left:849px;top:132.42px;font-size:12.5px;color:#000">LaborComments</div>
<div class="a" style="left:761px;top:154px;width:269px;height:69px;background:#ececec;border:2px solid #7a828c;border-top-width:2px"></div>
<svg class="a" style="left:1010px;top:156px" width="17" height="17" viewBox="0 0 17 17"><defs><radialGradient id="mg8" cx="0.4" cy="0.35" r="0.7"><stop offset="0" stop-color="#ffffff"/><stop offset="0.55" stop-color="#cfe8fa"/><stop offset="1" stop-color="#7fb4e0"/></radialGradient></defs><path d="M9.8 9.8L14.8 14.8" stroke="#5c5478" stroke-width="3.8" stroke-linecap="round"/><path d="M10.3 10.3L14.6 14.6" stroke="#f4a446" stroke-width="2" stroke-linecap="round"/><circle cx="6.6" cy="6.6" r="5.2" fill="url(#mg8)" stroke="#6482a4" stroke-width="1.3"/></svg>
<div class="t" style="left:826px;top:249.42px;font-size:12.5px;color:#222238">Document Folder:</div>
<div class="a" style="left:826px;top:264px;width:216px;height:49px;background:#ececec;border:2px solid #7a828c"></div>
<div class="a" style="left:1014px;top:240px;width:49px;height:23px;background:#fff;border:1px solid #c4c4c4"></div>
<div class="a" style="left:1024px;top:242px;width:30px;height:20px;background:#fff;border:1px solid #6a6262;border-top-width:1.5px;border-bottom-width:1.5px;border-radius:2px"></div>
<div class="t" style="left:1025.5px;top:246.94px;font-size:10.7px;color:#000;letter-spacing:-0.25px;-webkit-text-stroke:0.3px #000">Reset</div>
<div class="a" style="left:8px;top:356px;width:1172px;height:299px;background:#c6dbf0;border:1px solid #5a82c8;border-right-color:#7a8aa0;border-bottom-color:#7a8aa0"></div>
<div class="a" style="left:9px;top:357px;width:1170px;height:1px;background:#fff"></div>
<div class="a" style="left:10px;top:360px;width:1165px;height:291px;background:#fff;border:1px solid #a4acb8"></div>
<svg class="a" style="left:0;top:0" width="1188" height="362"><path d="M76.5 356 V340.5 L82.5 334.5 H134.5 V356" fill="#fff" stroke="#7088a8"/><path d="M77.5 356 V341 L83 335.5 H133.5 V356" fill="none" stroke="#fff"/><path d="M78 356 V341.5 L83.5 336 H134 V356Z" fill="#fb9a4c"/><path d="M10.5 356 V340.5 L16.5 334.5 H76.5 V356" fill="#fff" stroke="#5a82c8"/><rect x="11" y="356" width="66" height="4" fill="#c6dbf0"/><path d="M11.5 356 V341 L17 335.5 H75.5 V356" fill="none" stroke="#fff"/><path d="M12 356 V341.5 L17.5 336 H76 V356Z" fill="#c44b2c"/></svg>
<div class="t" style="left:16px;top:339.59px;font-size:12.3px;color:#fff;font-weight:bold;letter-spacing:-0.3px">Item(s)</div>
<div class="t" style="left:82px;top:340.42px;font-size:12.5px;color:#000">Labor</div>
<div class="t" style="left:45px;top:370.42px;font-size:12.5px;color:#222238">Search :</div>
<div class="t" style="left:120px;top:370.42px;font-size:12.5px;color:#222238">Asset</div>
<div class="a" style="left:162px;top:365px;width:120px;height:24px;background:#fff;border:1px solid #000;"></div>
<div class="t" style="left:362px;top:370.42px;font-size:12.5px;color:#222238">Product</div>
<div class="t" style="left:767.5px;top:372.42px;font-size:12.5px;color:#222238">existing lines</div>
<div class="a" style="left:11px;top:393px;width:1164px;height:1px;background:#b4b4b4"></div>
<div class="a" style="left:12px;top:397px;width:1162px;height:252px;background:#fff;border:1px solid #7890a8"></div>
<div class="a" style="left:13px;top:398px;width:1161px;height:39px;overflow:hidden"><svg class="a" style="left:-13px;top:-398px" width="1220" height="440"><rect x="13" y="398" width="15" height="19" fill="#8e3619"/><rect x="13" y="399" width="14" height="17" fill="#ff7a48"/><rect x="14" y="400" width="13" height="15" fill="#c44b2c"/><rect x="28" y="398" width="15" height="19" fill="#8e3619"/><rect x="28" y="399" width="14" height="17" fill="#ff7a48"/><rect x="29" y="400" width="13" height="15" fill="#c44b2c"/><rect x="43" y="398" width="15" height="19" fill="#8e3619"/><rect x="43" y="399" width="14" height="17" fill="#ff7a48"/><rect x="44" y="400" width="13" height="15" fill="#c44b2c"/><rect x="58" y="398" width="14" height="19" fill="#8e3619"/><rect x="58" y="399" width="13" height="17" fill="#ff7a48"/><rect x="59" y="400" width="12" height="15" fill="#c44b2c"/><rect x="72" y="398" width="15" height="19" fill="#8e3619"/><rect x="72" y="399" width="14" height="17" fill="#ff7a48"/><rect x="73" y="400" width="13" height="15" fill="#c44b2c"/><rect x="87" y="398" width="20" height="19" fill="#8e3619"/><rect x="87" y="399" width="19" height="17" fill="#ff7a48"/><rect x="88" y="400" width="18" height="15" fill="#c44b2c"/><rect x="107" y="398" width="20" height="19" fill="#8e3619"/><rect x="107" y="399" width="19" height="17" fill="#ff7a48"/><rect x="108" y="400" width="18" height="15" fill="#c44b2c"/><rect x="127" y="398" width="20" height="19" fill="#8e3619"/><rect x="127" y="399" width="19" height="17" fill="#ff7a48"/><rect x="128" y="400" width="18" height="15" fill="#c44b2c"/><rect x="147" y="398" width="75" height="19" fill="#8e3619"/><rect x="147" y="399" width="74" height="17" fill="#ff7a48"/><rect x="148" y="400" width="73" height="15" fill="#c44b2c"/><rect x="222" y="398" width="20" height="19" fill="#8e3619"/><rect x="222" y="399" width="19" height="17" fill="#ff7a48"/><rect x="223" y="400" width="18" height="15" fill="#c44b2c"/><rect x="242" y="398" width="45" height="19" fill="#8e3619"/><rect x="242" y="399" width="44" height="17" fill="#ff7a48"/><rect x="243" y="400" width="43" height="15" fill="#c44b2c"/><rect x="287" y="398" width="100" height="19" fill="#8e3619"/><rect x="287" y="399" width="99" height="17" fill="#ff7a48"/><rect x="288" y="400" width="98" height="15" fill="#c44b2c"/><rect x="387" y="398" width="363" height="19" fill="#8e3619"/><rect x="387" y="399" width="362" height="17" fill="#ff7a48"/><rect x="388" y="400" width="361" height="15" fill="#c44b2c"/><rect x="750" y="398" width="106" height="19" fill="#8e3619"/><rect x="750" y="399" width="105" height="17" fill="#ff7a48"/><rect x="751" y="400" width="104" height="15" fill="#c44b2c"/><rect x="856" y="398" width="89" height="19" fill="#8e3619"/><rect x="856" y="399" width="88" height="17" fill="#ff7a48"/><rect x="857" y="400" width="87" height="15" fill="#c44b2c"/><rect x="945" y="398" width="70" height="19" fill="#8e3619"/><rect x="945" y="399" width="69" height="17" fill="#ff7a48"/><rect x="946" y="400" width="68" height="15" fill="#c44b2c"/><rect x="1015" y="398" width="70" height="19" fill="#8e3619"/><rect x="1015" y="399" width="69" height="17" fill="#ff7a48"/><rect x="1016" y="400" width="68" height="15" fill="#c44b2c"/><rect x="1085" y="398" width="60" height="19" fill="#8e3619"/><rect x="1085" y="399" width="59" height="17" fill="#ff7a48"/><rect x="1086" y="400" width="58" height="15" fill="#c44b2c"/><rect x="1145" y="398" width="52" height="19" fill="#8e3619"/><rect x="1145" y="399" width="51" height="17" fill="#ff7a48"/><rect x="1146" y="400" width="50" height="15" fill="#c44b2c"/><rect x="13" y="417" width="15" height="19" fill="#fb9a4c"/><rect x="28" y="417" width="15" height="19" fill="#fb9a4c"/><rect x="43" y="417" width="15" height="19" fill="#fb9a4c"/><rect x="58" y="417" width="14" height="19" fill="#fb9a4c"/><rect x="72" y="417" width="15" height="19" fill="#fb9a4c"/><rect x="87" y="417" width="20" height="19" fill="#fb9a4c"/><rect x="107" y="417" width="20" height="19" fill="#fb9a4c"/><rect x="127" y="417" width="20" height="19" fill="#fb9a4c"/><rect x="147" y="417" width="75" height="19" fill="#fb9a4c"/><rect x="222" y="417" width="20" height="19" fill="#fb9a4c"/><rect x="242" y="417" width="45" height="19" fill="#fb9a4c"/><rect x="287" y="417" width="100" height="19" fill="#fb9a4c"/><rect x="387" y="417" width="363" height="19" fill="#fb9a4c"/><rect x="750" y="417" width="106" height="19" fill="#fb9a4c"/><rect x="856" y="417" width="89" height="19" fill="#fb9a4c"/><rect x="945" y="417" width="70" height="19" fill="#fb9a4c"/><rect x="1015" y="417" width="70" height="19" fill="#fb9a4c"/><rect x="1085" y="417" width="60" height="19" fill="#fb9a4c"/><rect x="1145" y="417" width="52" height="19" fill="#fb9a4c"/><rect x="28" y="417" width="1" height="19" fill="#c8762e"/><rect x="43" y="417" width="1" height="19" fill="#c8762e"/><rect x="58" y="417" width="1" height="19" fill="#c8762e"/><rect x="72" y="417" width="1" height="19" fill="#c8762e"/><rect x="87" y="417" width="1" height="19" fill="#c8762e"/><rect x="107" y="417" width="1" height="19" fill="#c8762e"/><rect x="127" y="417" width="1" height="19" fill="#c8762e"/><rect x="147" y="417" width="1" height="19" fill="#c8762e"/><rect x="222" y="417" width="1" height="19" fill="#c8762e"/><rect x="242" y="417" width="1" height="19" fill="#c8762e"/><rect x="287" y="417" width="1" height="19" fill="#c8762e"/><rect x="387" y="417" width="1" height="19" fill="#c8762e"/><rect x="750" y="417" width="1" height="19" fill="#c8762e"/><rect x="856" y="417" width="1" height="19" fill="#c8762e"/><rect x="945" y="417" width="1" height="19" fill="#c8762e"/><rect x="1015" y="417" width="1" height="19" fill="#c8762e"/><rect x="1085" y="417" width="1" height="19" fill="#c8762e"/><rect x="1145" y="417" width="1" height="19" fill="#c8762e"/><rect x="1197" y="417" width="1" height="19" fill="#c8762e"/><rect x="13" y="417" width="1161" height="1" fill="#ff8a4a"/><rect x="13" y="436" width="1161" height="1" fill="#c07030"/></svg></div>
<div class="a" style="left:13px;top:398px;width:1161px;height:19px;overflow:hidden">
<div class="t" style="left:0px;top:4.7px;width:15px;text-align:center;font-size:12px;color:#fff">T</div>
<div class="t" style="left:15px;top:4.7px;width:15px;text-align:center;font-size:12px;color:#fff">C</div>
<div class="t" style="left:30px;top:4.7px;width:15px;text-align:center;font-size:12px;color:#fff">X</div>
<div class="t" style="left:45px;top:4.7px;width:14px;text-align:center;font-size:12px;color:#fff">M</div>
<div class="t" style="left:59px;top:4.7px;width:15px;text-align:center;font-size:12px;color:#fff">S</div>
<div class="t" style="left:74px;top:4.7px;width:20px;text-align:center;font-size:12px;color:#fff">I.C</div>
<div class="t" style="left:94px;top:4.7px;width:20px;text-align:center;font-size:12px;color:#fff">I....</div>
<div class="t" style="left:114px;top:4.7px;width:20px;text-align:center;font-size:12px;color:#fff">I.I</div>
<div class="t" style="left:134px;top:4.7px;width:75px;text-align:center;font-size:12px;color:#fff">Status</div>
<div class="t" style="left:209px;top:4.7px;width:20px;text-align:center;font-size:12px;color:#fff">L</div>
<div class="t" style="left:229px;top:4.7px;width:45px;text-align:center;font-size:12px;color:#fff">Action</div>
<div class="t" style="left:274px;top:4.7px;width:100px;text-align:center;font-size:12px;color:#fff">Product ID</div>
<div class="t" style="left:374px;top:4.7px;width:363px;text-align:center;font-size:12px;color:#fff">Description</div>
<div class="t" style="left:737px;top:4.7px;width:106px;text-align:center;font-size:12px;color:#fff">Returning Site</div>
<div class="t" style="left:843px;top:4.7px;width:89px;text-align:center;font-size:12px;color:#fff">Day/Each Price</div>
<div class="t" style="left:932px;top:4.7px;width:70px;text-align:center;font-size:12px;color:#fff">Week Price</div>
<div class="t" style="left:1002px;top:4.7px;width:70px;text-align:center;font-size:12px;color:#fff">Month Price</div>
<div class="t" style="left:1072px;top:4.7px;width:60px;text-align:center;font-size:12px;color:#fff">Net Each</div>
<div class="t" style="left:1132px;top:4.7px;width:52px;text-align:center;font-size:12px;color:#fff">Total</div>
</div>
<svg class="a" style="left:14px;top:421px" width="13" height="13" viewBox="0 0 13 13"><defs><linearGradient id="cg1" x1="0" y1="0" x2="1" y2="1"><stop offset="0" stop-color="#ffffff"/><stop offset="0.4" stop-color="#fde6d4"/><stop offset="1" stop-color="#f48a48"/></linearGradient></defs><rect x="0" y="0" width="13" height="13" fill="#fff"/><rect x="0" y="0" width="12" height="12" fill="#6f8399"/><rect x="1" y="1" width="11" height="11" fill="#fff"/><rect x="2" y="2" width="10" height="10" fill="#6f8399"/><rect x="2" y="2" width="9" height="9" fill="url(#cg1)"/><path d="M3.2 5.3H4.9V7.5L9.3 2.9L10.1 3.6L4.9 9.8H3.2Z" fill="#141414"/></svg>
<svg class="a" style="left:29px;top:421px" width="13" height="13" viewBox="0 0 13 13"><defs><linearGradient id="cg2" x1="0" y1="0" x2="1" y2="1"><stop offset="0" stop-color="#ffffff"/><stop offset="0.4" stop-color="#fde6d4"/><stop offset="1" stop-color="#f48a48"/></linearGradient></defs><rect x="0" y="0" width="13" height="13" fill="#fff"/><rect x="0" y="0" width="12" height="12" fill="#6f8399"/><rect x="1" y="1" width="11" height="11" fill="#fff"/><rect x="2" y="2" width="10" height="10" fill="#6f8399"/><rect x="2" y="2" width="9" height="9" fill="url(#cg2)"/><path d="M3.2 5.3H4.9V7.5L9.3 2.9L10.1 3.6L4.9 9.8H3.2Z" fill="#141414"/></svg>
<svg class="a" style="left:44px;top:421px" width="13" height="13" viewBox="0 0 13 13"><defs><linearGradient id="cg3" x1="0" y1="0" x2="1" y2="1"><stop offset="0" stop-color="#ffffff"/><stop offset="0.4" stop-color="#fde6d4"/><stop offset="1" stop-color="#f48a48"/></linearGradient></defs><rect x="0" y="0" width="13" height="13" fill="#fff"/><rect x="0" y="0" width="12" height="12" fill="#6f8399"/><rect x="1" y="1" width="11" height="11" fill="#fff"/><rect x="2" y="2" width="10" height="10" fill="#6f8399"/><rect x="2" y="2" width="9" height="9" fill="url(#cg3)"/></svg>
<svg class="a" style="left:59px;top:421px" width="13" height="13" viewBox="0 0 13 13"><defs><linearGradient id="cg4" x1="0" y1="0" x2="1" y2="1"><stop offset="0" stop-color="#ffffff"/><stop offset="0.4" stop-color="#fde6d4"/><stop offset="1" stop-color="#f48a48"/></linearGradient></defs><rect x="0" y="0" width="13" height="13" fill="#fff"/><rect x="0" y="0" width="12" height="12" fill="#6f8399"/><rect x="1" y="1" width="11" height="11" fill="#fff"/><rect x="2" y="2" width="10" height="10" fill="#6f8399"/><rect x="2" y="2" width="9" height="9" fill="url(#cg4)"/></svg>
<svg class="a" style="left:73px;top:421px" width="13" height="13" viewBox="0 0 13 13"><defs><linearGradient id="cg5" x1="0" y1="0" x2="1" y2="1"><stop offset="0" stop-color="#ffffff"/><stop offset="0.4" stop-color="#fde6d4"/><stop offset="1" stop-color="#f48a48"/></linearGradient></defs><rect x="0" y="0" width="13" height="13" fill="#fff"/><rect x="0" y="0" width="12" height="12" fill="#6f8399"/><rect x="1" y="1" width="11" height="11" fill="#fff"/><rect x="2" y="2" width="10" height="10" fill="#6f8399"/><rect x="2" y="2" width="9" height="9" fill="url(#cg5)"/></svg>
<svg class="a" style="left:91px;top:421px" width="13" height="13" viewBox="0 0 13 13"><defs><linearGradient id="cg6" x1="0" y1="0" x2="1" y2="1"><stop offset="0" stop-color="#ffffff"/><stop offset="0.4" stop-color="#fde6d4"/><stop offset="1" stop-color="#f48a48"/></linearGradient></defs><rect x="0" y="0" width="13" height="13" fill="#fff"/><rect x="0" y="0" width="12" height="12" fill="#6f8399"/><rect x="1" y="1" width="11" height="11" fill="#fff"/><rect x="2" y="2" width="10" height="10" fill="#6f8399"/><rect x="2" y="2" width="9" height="9" fill="url(#cg6)"/></svg>
<svg class="a" style="left:111px;top:421px" width="13" height="13" viewBox="0 0 13 13"><defs><linearGradient id="cg7" x1="0" y1="0" x2="1" y2="1"><stop offset="0" stop-color="#ffffff"/><stop offset="0.4" stop-color="#fde6d4"/><stop offset="1" stop-color="#f48a48"/></linearGradient></defs><rect x="0" y="0" width="13" height="13" fill="#fff"/><rect x="0" y="0" width="12" height="12" fill="#6f8399"/><rect x="1" y="1" width="11" height="11" fill="#fff"/><rect x="2" y="2" width="10" height="10" fill="#6f8399"/><rect x="2" y="2" width="9" height="9" fill="url(#cg7)"/></svg>
<svg class="a" style="left:131px;top:421px" width="13" height="13" viewBox="0 0 13 13"><defs><linearGradient id="cg8" x1="0" y1="0" x2="1" y2="1"><stop offset="0" stop-color="#ffffff"/><stop offset="0.4" stop-color="#fde6d4"/><stop offset="1" stop-color="#f48a48"/></linearGradient></defs><rect x="0" y="0" width="13" height="13" fill="#fff"/><rect x="0" y="0" width="12" height="12" fill="#6f8399"/><rect x="1" y="1" width="11" height="11" fill="#fff"/><rect x="2" y="2" width="10" height="10" fill="#6f8399"/><rect x="2" y="2" width="9" height="9" fill="url(#cg8)"/></svg>
<svg class="a" style="left:226px;top:421px" width="13" height="13" viewBox="0 0 13 13"><defs><linearGradient id="cg9" x1="0" y1="0" x2="1" y2="1"><stop offset="0" stop-color="#ffffff"/><stop offset="0.4" stop-color="#fde6d4"/><stop offset="1" stop-color="#f48a48"/></linearGradient></defs><rect x="0" y="0" width="13" height="13" fill="#fff"/><rect x="0" y="0" width="12" height="12" fill="#6f8399"/><rect x="1" y="1" width="11" height="11" fill="#fff"/><rect x="2" y="2" width="10" height="10" fill="#6f8399"/><rect x="2" y="2" width="9" height="9" fill="url(#cg9)"/></svg>
<div class="t" style="left:149px;top:422.42px;font-size:12.5px;color:#111">Pool</div>
<div class="t" style="left:245px;top:422.42px;font-size:12.5px;color:#111">Rent</div>
<div class="t" style="left:289px;top:422.42px;font-size:12.5px;color:#111">LG LED</div>
<div class="t" style="left:777px;top:422.42px;font-size:12.5px;color:#111">EUROPE</div>
<div class="t" style="left:885px;top:422.4px;width:59px;text-align:right;font-size:12.5px;color:#111">0.00</div>
<div class="t" style="left:955px;top:422.4px;width:59px;text-align:right;font-size:12.5px;color:#111">0.00</div>
<div class="t" style="left:1025px;top:422.4px;width:59px;text-align:right;font-size:12.5px;color:#111">0.00</div>
<div class="t" style="left:1085px;top:422.4px;width:59px;text-align:right;font-size:12.5px;color:#111">0.00</div>
<div class="a" style="left:13px;top:631px;width:1160px;height:17px;background:#ececec;border-top:1px solid #7890a8;border-bottom:1px solid #7890a8"></div>
<div class="a" style="left:14px;top:632px;width:14px;height:15px;background:#ececec;border:1px solid #8aa0b8;border-left:none"></div>
<svg class="a" style="left:18px;top:635px" width="6" height="9" viewBox="0 0 6 9"><path d="M5 0V9L0 4.5Z" fill="#222"/></svg>
<div class="a" style="left:1157px;top:632px;width:15px;height:15px;background:#ececec;border:1px solid #8aa0b8"></div>
<svg class="a" style="left:1162px;top:636px" width="5" height="9" viewBox="0 0 5 9"><path d="M0 0V9L5 4.5Z" fill="#222"/></svg>
<div class="a" style="left:28px;top:631px;width:569px;height:16px;background:linear-gradient(#f2c4a0,#e8a070);border:1px solid #ffc000"></div>
<svg class="a" style="left:309px;top:635px" width="7" height="10" viewBox="0 0 7 10"><path d="M1.5 0V10M3.5 0V10M5.5 0V10" stroke="#7a7890" stroke-width="1"/></svg>
<div class="t" style="left:70px;top:663.49px;font-size:13.6px;font-weight:bold;color:#222;letter-spacing:0.3px">Items</div>
<div class="a" style="left:120px;top:657px;width:100px;height:24px;background:#ededed;border:1px solid #8a8a8a;"></div>
<div class="t" style="left:235px;top:663.49px;font-size:13.6px;font-weight:bold;color:#222;letter-spacing:0.3px">Labor</div>
<div class="a" style="left:287px;top:657px;width:100px;height:24px;background:#ededed;border:1px solid #8a8a8a;"></div>
<div class="t" style="left:446px;top:663.49px;font-size:13.6px;font-weight:bold;color:#222;letter-spacing:0.3px">Sub Total</div>
<div class="a" style="left:524px;top:657px;width:101px;height:24px;background:#ededed;border:1px solid #8a8a8a;"></div>
<div class="t" style="left:636px;top:663.49px;font-size:13.6px;font-weight:bold;color:#222;letter-spacing:0.3px">Tax</div>
<div class="a" style="left:670px;top:657px;width:100px;height:24px;background:#ededed;border:1px solid #8a8a8a;"></div>
<div class="a" style="left:813px;top:657px;width:89px;height:24px;background:#fff;border:1px solid #bbb"></div>
<div class="t" style="left:842px;top:663.49px;font-size:13.6px;font-weight:bold;color:#222;letter-spacing:0.3px">Total</div>
<div class="a" style="left:906px;top:657px;width:100px;height:24px;background:#ededed;border:1px solid #8a8a8a;"></div>
<div class="t" style="left:908px;top:662.74px;font-size:13.3px;font-weight:bold;color:#222">0.00</div>
<div class="a" style="left:9px;top:692px;width:1170px;height:23px;background:#fff;border:1px solid #a8a8a8;border-top:2px solid #888;border-left:2px solid #999"></div>
<div class="a" style="left:394px;top:189px;width:380px;height:350px;background:#e98f68;border:1px solid #c47448"></div>
<div class="a" style="left:404px;top:196px;width:16px;height:16px;background:#c4c4c4;border-top:2px solid #2c64b4;border-bottom:2px solid #2c64b4"></div>
<div class="t" style="left:405px;top:199px;font-family:'Liberation Serif',serif;font-size:11px;color:#111;letter-spacing:-0.5px">R<span style="font-size:10px;position:relative;top:1px">2</span></div>
<div class="t" style="left:511px;top:197.90px;font-size:14.3px;color:#2a2a2a">E-Pool Site Preference</div>
<div class="a" style="left:736px;top:190px;width:31px;height:20px;background:#c75050"></div>
<svg class="a" style="left:747px;top:196px" width="10" height="9" viewBox="0 0 10 9"><path d="M1.3 1L8.7 8M8.7 1L1.3 8" stroke="#fff" stroke-width="1.9"/></svg>
<div class="a" style="left:401px;top:219px;width:365px;height:312px;background:#fff;border-top:1px solid #c8784c;border-left:1px solid #c8784c"></div>
<div class="a" style="left:403px;top:221px;width:362px;height:309px;border:1px solid #b8b8b8"></div>
<div class="a" style="left:403px;top:221px;width:362px;height:44px;border-bottom:2px solid #a4a4a4"></div>
<div class="a" style="left:406px;top:224px;width:29px;height:29px;border:1px solid #b8b8b8;background:#fff"></div>
<svg class="a" style="left:409px;top:229px" width="24" height="19" viewBox="0 0 24 19"><defs><linearGradient id="okg" x1="0" y1="0" x2="0" y2="1"><stop offset="0" stop-color="#a8e070"/><stop offset="1" stop-color="#3a9020"/></linearGradient></defs><path d="M1 9L5 5L9 9.5L19 1L23 5L9 18Z" fill="url(#okg)" stroke="#3a8020" stroke-width="0.8"/></svg>
<div class="a" style="left:731px;top:224px;width:29px;height:29px;border:1px solid #b8b8b8;background:#fff"></div>
<svg class="a" style="left:735px;top:228px" width="22" height="22" viewBox="0 0 22 22"><defs><linearGradient id="ex2" x1="0" y1="0" x2="1" y2="1"><stop offset="0" stop-color="#f03818"/><stop offset="0.7" stop-color="#f04010"/><stop offset="1" stop-color="#f89030"/></linearGradient></defs><rect x="0.5" y="0.5" width="21" height="21" rx="2.5" fill="url(#ex2)" stroke="#a01010"/><text x="11" y="15" text-anchor="middle" font-size="9" fill="#fff" font-family="Liberation Sans">EXIT</text></svg>
<div class="a" style="left:404px;top:267px;width:359px;height:261px;background:#fff;border:1px solid #7890a8"></div>
<svg class="a" style="left:0;top:0" width="1188" height="400"><rect x="405" y="268" width="19" height="19" fill="#8e3619"/><rect x="405" y="269" width="18" height="17" fill="#ff7a48"/><rect x="406" y="270" width="17" height="15" fill="#c44b2c"/><rect x="424" y="268" width="121" height="19" fill="#8e3619"/><rect x="424" y="269" width="120" height="17" fill="#ff7a48"/><rect x="425" y="270" width="119" height="15" fill="#c44b2c"/><rect x="545" y="268" width="199" height="19" fill="#8e3619"/><rect x="545" y="269" width="198" height="17" fill="#ff7a48"/><rect x="546" y="270" width="197" height="15" fill="#c44b2c"/><rect x="744" y="268" width="18" height="19" fill="#c44b2c"/><rect x="744" y="268" width="1" height="19" fill="#ff7a48"/><rect x="405" y="287" width="340" height="1" fill="#ff8a4a"/><rect x="405" y="288" width="340" height="18" fill="#fff"/><rect x="405" y="306" width="340" height="1" fill="#c0783c"/><rect x="424" y="288" width="1" height="19" fill="#c0783c"/><rect x="545" y="288" width="1" height="19" fill="#c0783c"/><rect x="744" y="288" width="1" height="19" fill="#c0783c"/><rect x="405" y="307" width="340" height="18" fill="#fb9a4c"/><rect x="405" y="325" width="340" height="1" fill="#c0783c"/><rect x="424" y="307" width="1" height="19" fill="#c0783c"/><rect x="545" y="307" width="1" height="19" fill="#c0783c"/><rect x="744" y="307" width="1" height="19" fill="#c0783c"/><rect x="405" y="326" width="340" height="18" fill="#fff"/><rect x="405" y="344" width="340" height="1" fill="#c0783c"/><rect x="424" y="326" width="1" height="19" fill="#c0783c"/><rect x="545" y="326" width="1" height="19" fill="#c0783c"/><rect x="744" y="326" width="1" height="19" fill="#c0783c"/><rect x="405" y="345" width="340" height="18" fill="#fff"/><rect x="405" y="363" width="340" height="1" fill="#c0783c"/><rect x="424" y="345" width="1" height="19" fill="#c0783c"/><rect x="545" y="345" width="1" height="19" fill="#c0783c"/><rect x="744" y="345" width="1" height="19" fill="#c0783c"/><rect x="405" y="364" width="340" height="18" fill="#fff"/><rect x="405" y="382" width="340" height="1" fill="#c0783c"/><rect x="424" y="364" width="1" height="19" fill="#c0783c"/><rect x="545" y="364" width="1" height="19" fill="#c0783c"/><rect x="744" y="364" width="1" height="19" fill="#c0783c"/></svg>
<div class="t" style="left:405px;top:273.4px;width:19px;text-align:center;font-size:12.5px;color:#fff">S</div>
<div class="t" style="left:424px;top:273.4px;width:121px;text-align:center;font-size:12.5px;color:#fff">Site ID</div>
<div class="t" style="left:545px;top:273.4px;width:199px;text-align:center;font-size:12.5px;color:#fff">Site Name</div>
<div class="t" style="left:426px;top:292.42px;font-size:12.5px;color:#222238">MUNICH</div>
<div class="t" style="left:546px;top:292.42px;font-size:12.5px;color:#222238">MUNICH</div>
<svg class="a" style="left:408px;top:291px" width="13" height="13" viewBox="0 0 13 13"><defs><linearGradient id="cg10" x1="0" y1="0" x2="1" y2="1"><stop offset="0" stop-color="#ffffff"/><stop offset="0.4" stop-color="#fde6d4"/><stop offset="1" stop-color="#f48a48"/></linearGradient></defs><rect x="0" y="0" width="13" height="13" fill="#fff"/><rect x="0" y="0" width="12" height="12" fill="#6f8399"/><rect x="1" y="1" width="11" height="11" fill="#fff"/><rect x="2" y="2" width="10" height="10" fill="#6f8399"/><rect x="2" y="2" width="9" height="9" fill="url(#cg10)"/><path d="M3.2 5.3H4.9V7.5L9.3 2.9L10.1 3.6L4.9 9.8H3.2Z" fill="#141414"/></svg>
<div class="t" style="left:426px;top:311.42px;font-size:12.5px;color:#222238">BUDAPEST</div>
<div class="t" style="left:546px;top:311.42px;font-size:12.5px;color:#222238">BUDAPEST</div>
<svg class="a" style="left:408px;top:310px" width="13" height="13" viewBox="0 0 13 13"><defs><linearGradient id="cg11" x1="0" y1="0" x2="1" y2="1"><stop offset="0" stop-color="#ffffff"/><stop offset="0.4" stop-color="#fde6d4"/><stop offset="1" stop-color="#f48a48"/></linearGradient></defs><rect x="0" y="0" width="13" height="13" fill="#fff"/><rect x="0" y="0" width="12" height="12" fill="#6f8399"/><rect x="1" y="1" width="11" height="11" fill="#fff"/><rect x="2" y="2" width="10" height="10" fill="#6f8399"/><rect x="2" y="2" width="9" height="9" fill="url(#cg11)"/></svg>
<div class="t" style="left:426px;top:330.42px;font-size:12.5px;color:#222238">BERLIN</div>
<div class="t" style="left:546px;top:330.42px;font-size:12.5px;color:#222238">BERLIN</div>
<svg class="a" style="left:408px;top:329px" width="13" height="13" viewBox="0 0 13 13"><defs><linearGradient id="cg12" x1="0" y1="0" x2="1" y2="1"><stop offset="0" stop-color="#ffffff"/><stop offset="0.4" stop-color="#fde6d4"/><stop offset="1" stop-color="#f48a48"/></linearGradient></defs><rect x="0" y="0" width="13" height="13" fill="#fff"/><rect x="0" y="0" width="12" height="12" fill="#6f8399"/><rect x="1" y="1" width="11" height="11" fill="#fff"/><rect x="2" y="2" width="10" height="10" fill="#6f8399"/><rect x="2" y="2" width="9" height="9" fill="url(#cg12)"/><path d="M3.2 5.3H4.9V7.5L9.3 2.9L10.1 3.6L4.9 9.8H3.2Z" fill="#141414"/></svg>
<div class="t" style="left:426px;top:349.42px;font-size:12.5px;color:#222238">PARIS</div>
<div class="t" style="left:546px;top:349.42px;font-size:12.5px;color:#222238">PARIS</div>
<svg class="a" style="left:408px;top:348px" width="13" height="13" viewBox="0 0 13 13"><defs><linearGradient id="cg13" x1="0" y1="0" x2="1" y2="1"><stop offset="0" stop-color="#ffffff"/><stop offset="0.4" stop-color="#fde6d4"/><stop offset="1" stop-color="#f48a48"/></linearGradient></defs><rect x="0" y="0" width="13" height="13" fill="#fff"/><rect x="0" y="0" width="12" height="12" fill="#6f8399"/><rect x="1" y="1" width="11" height="11" fill="#fff"/><rect x="2" y="2" width="10" height="10" fill="#6f8399"/><rect x="2" y="2" width="9" height="9" fill="url(#cg13)"/><path d="M3.2 5.3H4.9V7.5L9.3 2.9L10.1 3.6L4.9 9.8H3.2Z" fill="#141414"/></svg>
<div class="t" style="left:426px;top:368.42px;font-size:12.5px;color:#222238">COLOGNE</div>
<div class="t" style="left:546px;top:368.42px;font-size:12.5px;color:#222238">COLOGNE</div>
<svg class="a" style="left:408px;top:367px" width="13" height="13" viewBox="0 0 13 13"><defs><linearGradient id="cg14" x1="0" y1="0" x2="1" y2="1"><stop offset="0" stop-color="#ffffff"/><stop offset="0.4" stop-color="#fde6d4"/><stop offset="1" stop-color="#f48a48"/></linearGradient></defs><rect x="0" y="0" width="13" height="13" fill="#fff"/><rect x="0" y="0" width="12" height="12" fill="#6f8399"/><rect x="1" y="1" width="11" height="11" fill="#fff"/><rect x="2" y="2" width="10" height="10" fill="#6f8399"/><rect x="2" y="2" width="9" height="9" fill="url(#cg14)"/><path d="M3.2 5.3H4.9V7.5L9.3 2.9L10.1 3.6L4.9 9.8H3.2Z" fill="#141414"/></svg>
<div class="a" style="left:403px;top:304px;width:344px;height:22px;border:2px solid #c00000"></div>
<div class="a" style="left:405px;top:306px;width:19px;height:18px;border:1px solid #f00000;border-top-color:#b07030"></div>
<div class="a" style="left:405px;top:307px;width:19px;height:17px;border:1px solid #f00000"></div>
<svg class="a" style="left:589px;top:160px" width="13" height="13" viewBox="0 0 13 13"><defs><linearGradient id="cg15" x1="0" y1="0" x2="1" y2="1"><stop offset="0" stop-color="#ffffff"/><stop offset="0.4" stop-color="#fde6d4"/><stop offset="1" stop-color="#f48a48"/></linearGradient></defs><rect x="0" y="0" width="13" height="13" fill="#fff"/><rect x="0" y="0" width="12" height="12" fill="#6f8399"/><rect x="1" y="1" width="11" height="11" fill="#fff"/><rect x="2" y="2" width="10" height="10" fill="#6f8399"/><rect x="2" y="2" width="9" height="9" fill="url(#cg15)"/><path d="M3.2 5.3H4.9V7.5L9.3 2.9L10.1 3.6L4.9 9.8H3.2Z" fill="#141414"/></svg>
</body></html>
